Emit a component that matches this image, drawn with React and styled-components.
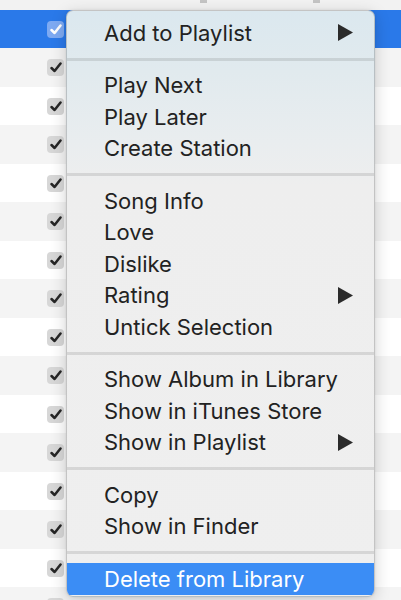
import React from 'react';
import styled, { createGlobalStyle } from 'styled-components';

const GlobalStyle = createGlobalStyle`
  html, body {
    margin: 0;
    padding: 0;
    background: #f3f3f3;
  }
`;

const Page = styled.div`
  position: relative;
  width: 401px;
  height: 600px;
  overflow: hidden;
  background: #f3f3f3;
  font-family: Inter, "Liberation Sans", sans-serif;
`;

const HeaderStrip = styled.div`
  position: relative;
  height: 9.75px;
  background: #f2f2f2;
`;

const HeaderMark = styled.span`
  position: absolute;
  top: 0;
  left: ${p => p.$left}px;
  width: 7px;
  height: 3px;
  background: #c4c4c4;
`;

const Row = styled.div`
  display: flex;
  align-items: center;
  height: 38.5px;
  padding-left: 47px;
  background: ${p => (p.$selected ? '#2a79e9' : p.$odd ? '#f4f4f4' : '#ffffff')};
`;

const CheckBox = styled.div`
  display: flex;
  align-items: center;
  justify-content: center;
  width: 17px;
  height: 17px;
  border-radius: 4px;
  background: ${p => (p.$selected ? '#7eaaf2' : '#d7d7d7')};
  color: ${p => (p.$selected ? '#ffffff' : '#262626')};
`;

const Menu = styled.div`
  position: absolute;
  left: 66px;
  top: 10px;
  width: 309px;
  height: 587px;
  box-sizing: border-box;
  padding-top: 6px;
  border: 1px solid rgba(0, 0, 0, 0.18);
  border-radius: 7px;
  background: linear-gradient(
    to bottom,
    #dbe8ef 0px,
    #e1eaee 60px,
    #e9edef 130px,
    #eeeeee 175px,
    #efefef 100%
  );
  box-shadow: 0 4px 16px rgba(0, 0, 0, 0.18), 0 0 3px rgba(0, 0, 0, 0.08);
  overflow: hidden;
`;

const Item = styled.div`
  display: flex;
  align-items: center;
  justify-content: space-between;
  height: 31.5px;
  padding: 0 21px 0 37px;
  font-size: 22px;
  color: ${p => (p.$active ? '#ffffff' : '#222222')};
  background: ${p => (p.$active ? '#3b8df5' : 'transparent')};
  white-space: nowrap;
`;

const Separator = styled.div`
  display: flex;
  align-items: center;
  height: 21px;

  &::before {
    content: '';
    flex: 1;
    height: 3px;
    background: rgba(0, 0, 0, 0.1);
  }
`;

const Arrow = () => (
  <svg width="15" height="17" viewBox="0 0 15 17">
    <polygon points="0,0 15,8.5 0,17" fill="#2b2b2b" />
  </svg>
);

const Check = () => (
  <svg width="12" height="11" viewBox="0 0 12 11">
    <path d="M1.5 6 L4.6 9 L10.5 1.5" fill="none" stroke="currentColor" strokeWidth="2.5" strokeLinecap="round" strokeLinejoin="round" />
  </svg>
);

const sections = [
  [{ label: 'Add to Playlist', sub: true }],
  [{ label: 'Play Next' }, { label: 'Play Later' }, { label: 'Create Station' }],
  [
    { label: 'Song Info' },
    { label: 'Love' },
    { label: 'Dislike' },
    { label: 'Rating', sub: true },
    { label: 'Untick Selection' },
  ],
  [
    { label: 'Show Album in Library' },
    { label: 'Show in iTunes Store' },
    { label: 'Show in Playlist', sub: true },
  ],
  [{ label: 'Copy' }, { label: 'Show in Finder' }],
  [{ label: 'Delete from Library', active: true }],
];

const rows = Array.from({ length: 16 }, (_, i) => i);

export default function App() {
  return (
    <Page>
      <GlobalStyle />
      <HeaderStrip>
        <HeaderMark $left={200} />
        <HeaderMark $left={313} />
      </HeaderStrip>
      {rows.map(i => (
        <Row key={i} $selected={i === 0} $odd={i % 2 === 1}>
          <CheckBox $selected={i === 0}>
            <Check />
          </CheckBox>
        </Row>
      ))}
      <Menu>
        {sections.map((section, si) => (
          <React.Fragment key={si}>
            {si > 0 && <Separator />}
            {section.map(item => (
              <Item key={item.label} $active={item.active}>
                <span>{item.label}</span>
                {item.sub && <Arrow />}
              </Item>
            ))}
          </React.Fragment>
        ))}
      </Menu>
    </Page>
  );
}
